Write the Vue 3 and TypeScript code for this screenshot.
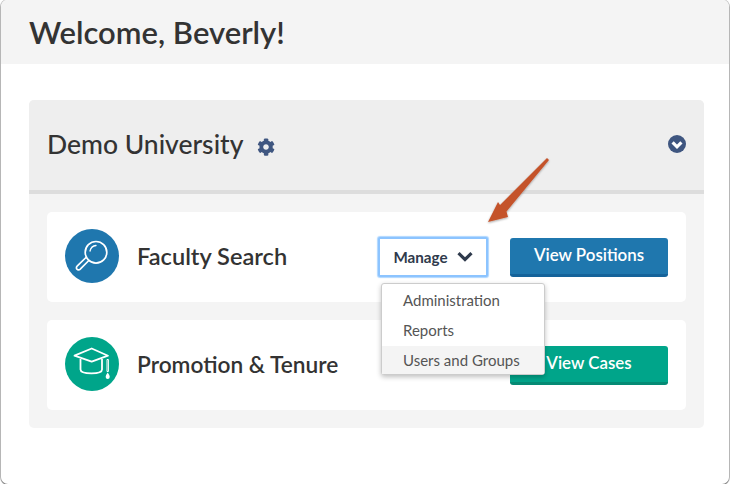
<template>
  <div class="window">
    <header class="top">
      <h1>Welcome, Beverly!</h1>
    </header>
    <main class="content">
      <section class="panel">
        <div class="panel-head">
          <h2>Demo University</h2>
          <svg class="gear" viewBox="0 0 512 512" width="18" height="18">
            <path fill="#3f5680" d="M487 315l-42-25c4-23 4-45 0-68l42-25c5-3 7-8 6-14-11-35-30-67-54-93-4-4-10-5-15-2l-42 24c-18-15-38-27-60-34V30c0-6-4-11-9-12-37-8-74-8-109 0-5 1-9 6-9 12v48c-22 8-42 20-60 35L93 89c-5-3-11-2-15 2-24 26-43 58-54 93-2 6 1 11 6 14l42 25c-4 23-4 45 0 68l-42 25c-5 3-7 8-6 14 11 35 30 67 54 93 4 4 10 5 15 2l42-24c18 15 38 27 60 34v49c0 6 4 11 9 12 37 8 74 8 109 0 5-1 9-6 9-12v-49c22-8 42-20 60-34l42 24c5 3 11 2 15-2 24-26 43-58 54-93 1-6-1-11-6-14zM256 336c-44 0-80-36-80-80s36-80 80-80 80 36 80 80-36 80-80 80z"/>
          </svg>
          <svg class="toggle" viewBox="0 0 18 18" width="18" height="18">
            <circle cx="9" cy="9" r="9" fill="#3f5680"/>
            <path d="M4.600 7.400 9 11.800l4.400-4.400" fill="none" stroke="#fff" stroke-width="3.200"/>
          </svg>
        </div>
        <div class="panel-body">
          <div v-for="app in apps" :key="app.name" class="row">
            <span class="badge" :style="{ background: app.color }">
              <svg v-if="app.icon === 'search'" viewBox="0 0 54 54" width="54" height="54" fill="none" stroke="#fff">
                <circle cx="31" cy="23.300" r="10.800" stroke-width="1.700"/>
                <path d="M25 22a7 7 0 0 1 6-5.500" stroke-width="1.300" stroke-linecap="round"/>
                <path d="M23.800 31.500 15 40.300a2.100 2.100 0 0 1-3-.1 2.100 2.100 0 0 1 .1-3L22 27.500" stroke-width="1.700" stroke-linejoin="round"/>
              </svg>
              <svg v-else viewBox="0 0 54 54" width="54" height="54" fill="none" stroke="#fff" stroke-width="1.800" stroke-linejoin="round">
                <path d="M9.500 18.700 26.700 11.500 43 18.700 26.700 24.700z"/>
                <path d="M15.500 22v10.500c0 2.500 5 3.800 11 3.800s10.500-1.300 10.500-3.800V22"/>
                <path d="M42 22.500h1.400v12H42z" stroke-width="1"/>
                <path d="M42.700 35.500c1.500 2.200 2 3.200 2 4.500a2 2 0 0 1-4 0c0-1.300.5-2.300 2-4.500z" fill="#fff" stroke="none"/>
              </svg>
            </span>
            <span class="name">{{ app.name }}</span>
            <div v-if="app.manage" class="manage-wrap">
              <button type="button" class="manage">
                Manage
                <svg viewBox="0 0 16 11" width="16" height="11">
                  <path d="M1.500 2.200 8 8.500l6.500-6.300" fill="none" stroke="#2f3a4c" stroke-width="3.200"/>
                </svg>
              </button>
              <ul class="menu">
                <li v-for="item in menu" :key="item" :class="{ hover: item === 'Users and Groups' }">{{ item }}</li>
              </ul>
            </div>
            <button type="button" class="action" :style="{ background: app.color, borderBottomColor: app.dark }">
              {{ app.action }}
            </button>
          </div>
        </div>
      </section>
    </main>
    <svg class="arrow" viewBox="0 0 80 84" width="80" height="84">
      <defs>
        <filter id="arrow-shadow" x="-20%" y="-20%" width="140%" height="140%">
          <feDropShadow dx="0" dy="1" stdDeviation="1" flood-color="#000" flood-opacity="0.35"/>
        </filter>
      </defs>
      <path filter="url(#arrow-shadow)" fill="#c4532c" d="M9 70 19 50 21 53 68 6 70 8 27.500 59.500 29 65z"/>
    </svg>
  </div>
</template>

<script setup lang="ts">
const apps = [
  { name: "Faculty Search", icon: "search", color: "#1f77ae", dark: "#15639a", action: "View Positions", manage: true },
  { name: "Promotion & Tenure", icon: "cap", color: "#00a58a", dark: "#058a74", action: "View Cases", manage: false },
];

const menu = ["Administration", "Reports", "Users and Groups"];
</script>

<style>
html,
body {
  background: #fff;
}
</style>

<style scoped>
.window {
  position: relative;
  box-sizing: border-box;
  width: 728px;
  height: 484px;
  margin-left: 1px;
  border-radius: 7px;
  background: #fff;
  box-shadow: 0 -1px 0 #e2e2e2, 0 1px 1px #777, 0 0 0 1px #bdbdbd;
  overflow: hidden;
  font-family: Lato, "Liberation Sans", sans-serif;
  color: #333;
}
.top {
  height: 64px;
  padding: 0 28px;
  display: flex;
  align-items: center;
  background: #f4f4f4;
}
h1 {
  margin: 0;
  font-size: 31px;
  font-weight: 600;
}
.content {
  padding: 36px 25px 0 28px;
}
.panel {
  border-radius: 5px;
  overflow: hidden;
  background: #f4f4f4;
}
.panel-head {
  height: 90px;
  padding: 0 18px;
  display: flex;
  align-items: center;
  background: #eee;
  border-bottom: 4px solid #ddd;
}
h2 {
  margin: 0;
  font-size: 26.500px;
  font-weight: 500;
  position: relative;
  top: -1px;
}
.gear {
  margin-left: 14px;
  margin-top: 3px;
}
.toggle {
  margin-left: auto;
  margin-top: -3px;
}
.panel-body {
  padding: 18px;
  display: flex;
  flex-direction: column;
  gap: 18px;
}
.row {
  height: 90px;
  padding: 0 18px;
  display: flex;
  align-items: center;
  background: #fff;
  border-radius: 5px;
}
.badge {
  width: 54px;
  height: 54px;
  border-radius: 50%;
  flex: none;
  display: block;
  margin-top: -2px;
}
.name {
  margin-left: 18px;
  margin-top: -2px;
  font-size: 22.700px;
  font-weight: 600;
}
.row:first-child .name {
  font-size: 23.600px;
}
.manage-wrap {
  position: relative;
  margin-left: auto;
  margin-top: -1px;
}
.manage {
  box-sizing: border-box;
  width: 110px;
  height: 40px;
  display: flex;
  align-items: center;
  justify-content: center;
  gap: 9px;
  padding: 0;
  background: #fff;
  border: 2px solid #8cc4ff;
  border-radius: 2px;
  box-shadow: 0 0 1px 1px rgba(140, 196, 255, 0.7);
  font: 700 15.200px Lato, "Liberation Sans", sans-serif;
  color: #2f3a4c;
}
.menu {
  position: absolute;
  z-index: 2;
  top: 46px;
  left: 3px;
  box-sizing: border-box;
  width: 164px;
  height: 92px;
  margin: 0;
  padding: 1px 0;
  list-style: none;
  background: #fff;
  border: 1px solid #ccc;
  border-radius: 3px;
  box-shadow: 0 2px 5px rgba(0, 0, 0, 0.25);
}
.menu li {
  height: 30px;
  line-height: 30px;
  padding-left: 21px;
  font-size: 15px;
  color: #555;
}
.menu li.hover {
  height: 28px;
  margin-top: 1px;
  line-height: 29px;
  background: #f4f4f4;
}
.action {
  box-sizing: border-box;
  width: 158px;
  height: 39px;
  margin-left: 22px;
  padding: 0 0 2px;
  border: 0;
  border-bottom: 3px solid;
  border-radius: 3px;
  color: #fff;
  font: 600 16.900px Lato, "Liberation Sans", sans-serif;
}
.row:last-child .action {
  margin-left: auto;
}
.arrow {
  position: absolute;
  left: 478px;
  top: 152px;
}
</style>
